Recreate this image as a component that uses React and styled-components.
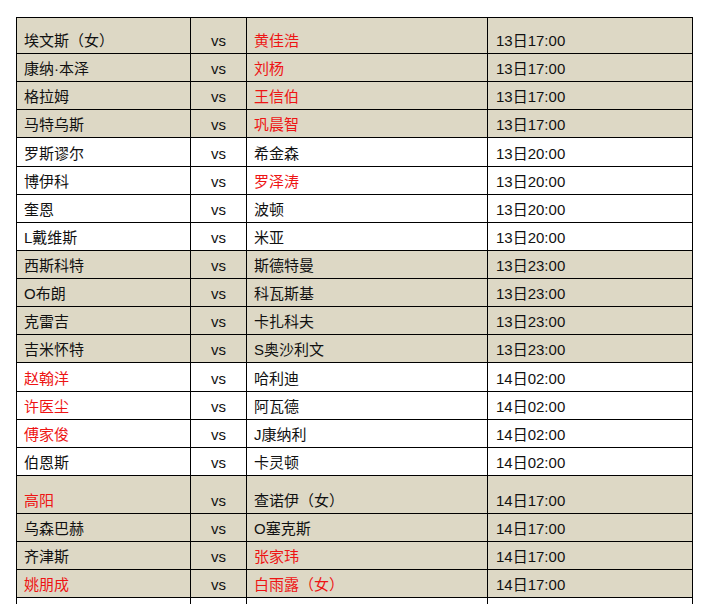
import React from "react";
import styled, { createGlobalStyle } from "styled-components";

const GlobalStyle = createGlobalStyle`
  body {
    margin: 0;
    background: #ffffff;
    font-family: "Liberation Sans", "Noto Sans CJK SC", sans-serif;
  }
`;

const Wrapper = styled.div`
  padding: 17px 0 0 16px;
`;

const Table = styled.table`
  border-collapse: collapse;
  table-layout: fixed;
  width: 676px;
  font-size: 15px;
  color: #111;
`;

const Row = styled.tr`
  height: ${(p) => p.$h || 28.13}px;
  background: ${(p) => (p.$shade ? "#ddd8c5" : "#ffffff")};
`;

const Cell = styled.td`
  border: 1px solid #000;
  padding: 0 6px 2px 7px;
  line-height: 20px;
  vertical-align: bottom;
  white-space: nowrap;
  color: ${(p) => (p.$red ? "#ee1414" : "#111")};
`;

const VsCell = styled(Cell)`
  text-align: center;
  padding-left: 0;
  padding-right: 0;
`;

const TimeCell = styled(Cell)`
  padding-left: 8px;
`;

// [left, leftRed, right, rightRed, time, shaded, height]
const matches = [
  ["埃文斯（女）", 0, "黄佳浩", 1, "13日17:00", 1, 36],
  ["康纳·本泽", 0, "刘杨", 1, "13日17:00", 1],
  ["格拉姆", 0, "王信伯", 1, "13日17:00", 1],
  ["马特乌斯", 0, "巩晨智", 1, "13日17:00", 1],
  ["罗斯谬尔", 0, "希金森", 0, "13日20:00", 0],
  ["博伊科", 0, "罗泽涛", 1, "13日20:00", 0],
  ["奎恩", 0, "波顿", 0, "13日20:00", 0],
  ["L戴维斯", 0, "米亚", 0, "13日20:00", 0],
  ["西斯科特", 0, "斯德特曼", 0, "13日23:00", 1],
  ["O布朗", 0, "科瓦斯基", 0, "13日23:00", 1],
  ["克雷吉", 0, "卡扎科夫", 0, "13日23:00", 1],
  ["吉米怀特", 0, "S奥沙利文", 0, "13日23:00", 1],
  ["赵翰洋", 1, "哈利迪", 0, "14日02:00", 0],
  ["许医尘", 1, "阿瓦德", 0, "14日02:00", 0],
  ["傅家俊", 1, "J康纳利", 0, "14日02:00", 0],
  ["伯恩斯", 0, "卡灵顿", 0, "14日02:00", 0],
  ["高阳", 1, "查诺伊（女）", 0, "14日17:00", 1, 38],
  ["乌森巴赫", 0, "O塞克斯", 0, "14日17:00", 1],
  ["齐津斯", 0, "张家玮", 1, "14日17:00", 1],
  ["姚朋成", 1, "白雨露（女）", 1, "14日17:00", 1],
];

export default function App() {
  return (
    <Wrapper>
      <GlobalStyle />
      <Table>
        <colgroup>
          <col style={{ width: 174 }} />
          <col style={{ width: 56 }} />
          <col style={{ width: 241 }} />
          <col style={{ width: 205 }} />
        </colgroup>
        <tbody>
          {matches.map(([l, lr, r, rr, t, s, h], i) => (
            <Row key={i} $shade={s} $h={h}>
              <Cell $red={lr}>{l}</Cell>
              <VsCell>vs</VsCell>
              <Cell $red={rr}>{r}</Cell>
              <TimeCell>{t}</TimeCell>
            </Row>
          ))}
          <Row>
            <Cell />
            <VsCell />
            <Cell />
            <TimeCell />
          </Row>
        </tbody>
      </Table>
    </Wrapper>
  );
}
